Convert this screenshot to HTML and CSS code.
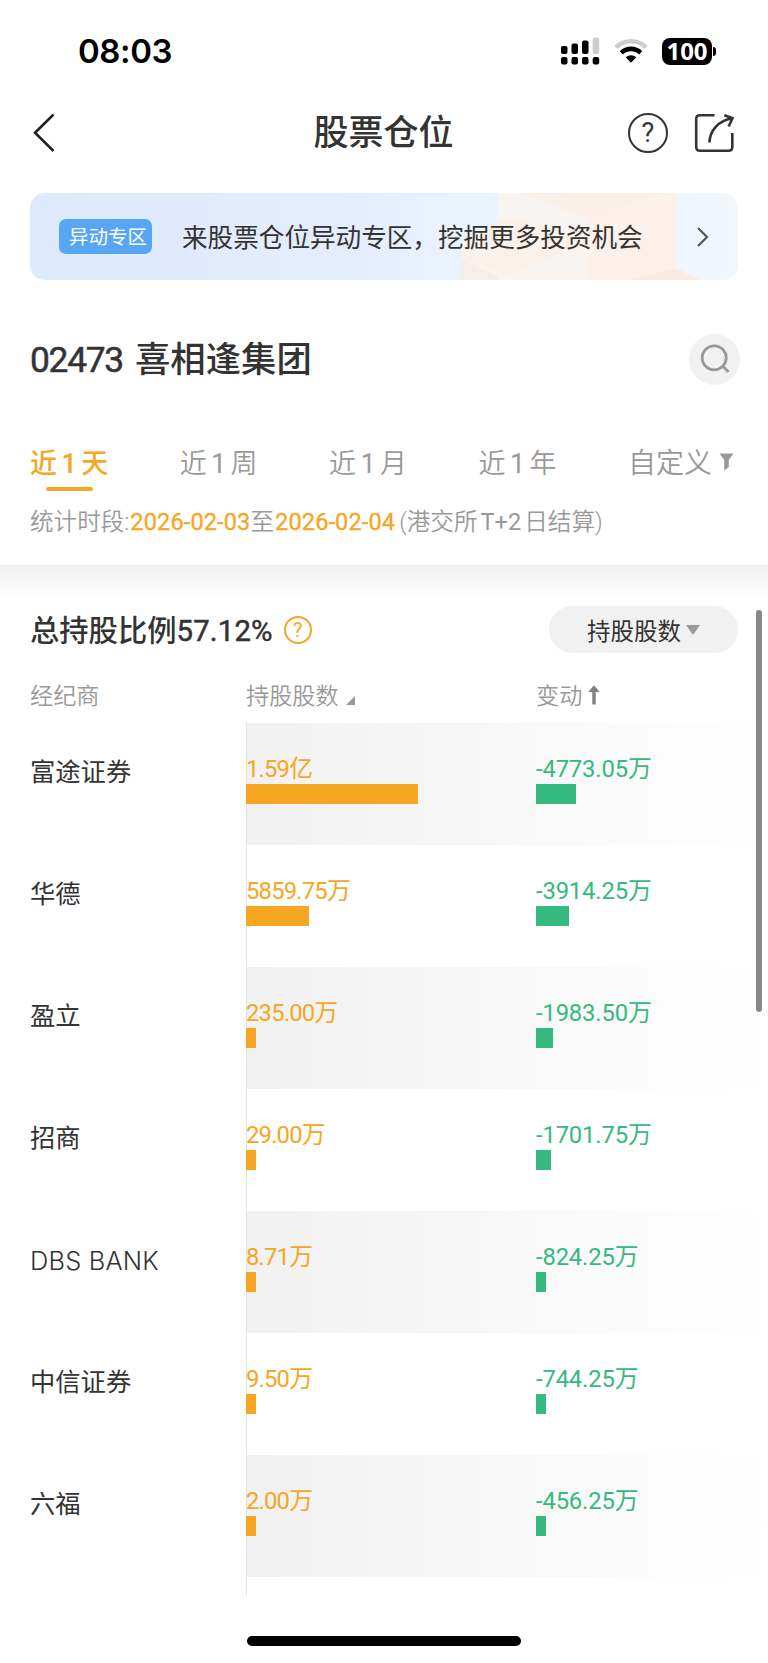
FILE: index.html
```html
<!DOCTYPE html>
<html lang="zh-CN">
<head>
  <meta charset="UTF-8">
  <meta name="viewport" content="width=device-width, initial-scale=1.0">
  <title>股票仓位</title>
  <link rel="stylesheet" href="styles.css">
</head>
<body>
  <div class="status-bar">
    <div class="time">08:03</div>
    <div class="status-icons">
      <svg class="signal" width="39" height="28" viewBox="0 0 39 28">
        <g fill="#000">
          <rect x="0" y="9" width="6.5" height="8" rx="2"/>
          <rect x="10.5" y="6.5" width="6.5" height="10.5" rx="2"/>
          <rect x="21" y="3.5" width="6.5" height="13.5" rx="2"/>
          <rect x="0" y="20" width="6.5" height="7.5" rx="2"/>
          <rect x="10.5" y="20" width="6.5" height="7.5" rx="2"/>
          <rect x="21" y="20" width="6.5" height="7.5" rx="2"/>
          <rect x="31.7" y="20" width="6.5" height="7.5" rx="2"/>
        </g>
        <rect x="31.7" y="0.5" width="6.5" height="16.5" rx="2" fill="#ccc"/>
      </svg>
      <svg class="wifi" width="34" height="26" viewBox="0 0 34 26" fill="none">
        <path d="M2 9.3A21.5 21.5 0 0 1 32 9.3" stroke="#ccc" stroke-width="4.6"/>
        <path d="M7.3 14.8A14 14 0 0 1 26.7 14.8" stroke="#000" stroke-width="4.6"/>
        <path d="M11.7 19.3A7.8 7.8 0 0 1 22.3 19.3L17 24.8Z" fill="#000"/>
      </svg>
      <div class="battery">100</div>
      <div class="battery-cap"></div>
    </div>
  </div>

  <div class="nav">
    <svg class="back" width="24" height="40" viewBox="0 0 24 40" fill="none" stroke="#222" stroke-width="2.6">
      <path d="M21.5 1.5L3 19.8L21.5 38"/>
    </svg>
    <div class="nav-title">股票仓位</div>
    <div class="nav-actions">
      <div class="help">?</div>
      <svg width="40" height="40" viewBox="0 0 40 40" fill="none" stroke="#333" stroke-width="2.6">
        <path d="M20.5 2.2H6Q2.2 2.2 2.2 6V34Q2.2 37.8 6 37.8H34.5Q38.3 37.8 38.3 34V20"/>
        <path d="M15.4 29.5C16 18 24 7.5 38 5.5"/>
        <path d="M30.3 2.2L38.5 5.2L34.7 13.5"/>
      </svg>
    </div>
  </div>

  <div class="banner">
    <svg class="banner-art" width="708" height="87" viewBox="0 0 708 87">
      <path d="M431 66L468 43V0H646V75L670 87H431Z" fill="#f8f4f2"/>
      <path d="M488 0H636L557 25Z" fill="#faf0e8"/>
      <path d="M557 25L646 0V75L612 87H557Z" fill="#fbf1ea"/>
      <path d="M431 66L468 84V87H431Z" fill="#f6eeea"/>
      <path d="M431 50L468 27Q490 20 557 50L478 82L431 66Z" fill="#faf1ea"/>
      <path d="M600 87L646 75L670 87Z" fill="#f9ebe1"/>
    </svg>
    <span class="banner-tag">异动专区</span>
    <span class="banner-text">来股票仓位异动专区，挖掘更多投资机会</span>
    <svg class="banner-arrow" width="14" height="22" viewBox="0 0 14 22" fill="none" stroke="#555" stroke-width="2.2">
      <path d="M2 2L11 11L2 20"/>
    </svg>
  </div>

  <div class="stock">
    <div class="stock-name"><span class="stock-code">02473</span>喜相逢集团</div>
    <div class="search">
      <svg width="30" height="30" viewBox="0 0 30 30" fill="none" stroke="#999" stroke-width="2.8">
        <circle cx="14.2" cy="13.8" r="12"/>
        <path d="M22.5 22L28.5 28"/>
      </svg>
    </div>
  </div>

  <div class="tabs">
    <div class="tab active">近<i>1</i>天</div>
    <div class="tab">近<i>1</i>周</div>
    <div class="tab">近<i>1</i>月</div>
    <div class="tab">近<i>1</i>年</div>
    <div class="tab custom">自定义
      <svg width="15" height="18" viewBox="0 0 15 18" fill="#999">
        <path d="M0.5 0.5H14.5L9.8 7V14L5.2 17.5V7Z"/>
      </svg>
    </div>
  </div>

  <div class="period">统计时段:<b>2026-02-03</b>至<b>2026-02-04</b><span class="period-note">(港交所<i>T+2</i>日结算)</span></div>

  <div class="divider"></div>

  <div class="summary">
    <div class="summary-title">总持股比例<span class="num">57.12%</span></div>
    <div class="summary-help">?</div>
    <div class="select">持股股数<span class="caret"></span></div>
  </div>

  <div class="table-head">
    <div>经纪商</div>
    <div>持股股数
      <svg class="corner" width="9" height="9" viewBox="0 0 9 9">
        <path d="M9 0V9H0Z" fill="#999"/>
      </svg>
    </div>
    <div>变动
      <svg class="up" width="12" height="20" viewBox="0 0 12 20">
        <path d="M6 0.3L11.7 7H7.7V19.5H4.3V7H0.3Z" fill="#808080"/>
      </svg>
    </div>
  </div>

  <div class="table">
    <div class="row">
      <div class="name">富途证券</div>
      <div class="hold">1.59亿<div class="bar" style="width: 172px"></div></div>
      <div class="change">-4773.05万<div class="bar" style="width: 40px"></div></div>
    </div>
    <div class="row">
      <div class="name">华德</div>
      <div class="hold">5859.75万<div class="bar" style="width: 63px"></div></div>
      <div class="change">-3914.25万<div class="bar" style="width: 33px"></div></div>
    </div>
    <div class="row">
      <div class="name">盈立</div>
      <div class="hold">235.00万<div class="bar" style="width: 10px"></div></div>
      <div class="change">-1983.50万<div class="bar" style="width: 17px"></div></div>
    </div>
    <div class="row">
      <div class="name">招商</div>
      <div class="hold">29.00万<div class="bar" style="width: 10px"></div></div>
      <div class="change">-1701.75万<div class="bar" style="width: 15px"></div></div>
    </div>
    <div class="row">
      <div class="name latin">DBS BANK</div>
      <div class="hold">8.71万<div class="bar" style="width: 10px"></div></div>
      <div class="change">-824.25万<div class="bar" style="width: 10px"></div></div>
    </div>
    <div class="row">
      <div class="name">中信证券</div>
      <div class="hold">9.50万<div class="bar" style="width: 10px"></div></div>
      <div class="change">-744.25万<div class="bar" style="width: 10px"></div></div>
    </div>
    <div class="row">
      <div class="name">六福</div>
      <div class="hold">2.00万<div class="bar" style="width: 10px"></div></div>
      <div class="change">-456.25万<div class="bar" style="width: 10px"></div></div>
    </div>
    <div class="row row-cut"><div></div><div class="hold"></div></div>
  </div>

  <div class="home-indicator"></div>
  <div class="scrollbar"></div>
</body>
</html>
```
FILE: styles.css
```css
:root {
  --orange: #f6a623;
  --green: #36b97e;
  --text: #333;
  --gray: #999;
}
* {
  box-sizing: border-box;
}
body {
  margin: 0;
  width: 768px;
  height: 1663px;
  position: relative;
  overflow: hidden;
  background-color: #fff;
  color: var(--text);
  font-family: Roboto, "Noto Sans CJK SC", sans-serif;
}
i {
  font-style: normal;
}

.status-bar {
  height: 102px;
  display: flex;
  justify-content: space-between;
  align-items: center;
  padding: 0 52px 0 78px;
}
.time {
  font: 600 33px/40px Inter, sans-serif;
  letter-spacing: -0.4px;
  color: #000;
}
.status-icons {
  display: flex;
  align-items: center;
}
.wifi {
  margin: 0 14px 0 14px;
}
.battery {
  width: 50px;
  height: 27px;
  border-radius: 8px;
  background-color: #000;
  color: #fff;
  font: 700 24px/25px "Noto Sans", sans-serif;
  text-align: center;
}
.battery-cap {
  width: 3px;
  height: 9px;
  margin-left: 1px;
  border-radius: 0 4px 4px 0;
  background-color: #000;
}

.nav {
  height: 62px;
  display: grid;
  grid-template-columns: 1fr auto 1fr;
  align-items: center;
  padding: 0 33px 0 32px;
}
.nav-title {
  padding-top: 2px;
  font-size: 35px;
  font-weight: 500;
  line-height: 50px;
}
.nav-actions {
  display: flex;
  justify-content: flex-end;
  gap: 26px;
  margin-right: 1px;
}
.help {
  width: 40px;
  height: 40px;
  border: 2.4px solid #333;
  border-radius: 50%;
  font-size: 27px;
  line-height: 37px;
  text-align: center;
}

.banner {
  position: relative;
  height: 87px;
  margin: 29px 30px 0;
  padding: 0 29px;
  display: flex;
  align-items: center;
  border-radius: 15px;
  overflow: hidden;
  background: linear-gradient(to right, #dceafc, #e3edfd 45%, #ebf3fe 62%, #f2f7fe);
}
.banner-art {
  position: absolute;
  left: 0;
  top: 0;
}
.banner-tag {
  position: relative;
  width: 93px;
  height: 35px;
  border-radius: 7px;
  background-color: #58a6f3;
  color: #fff;
  font-size: 19.5px;
  line-height: 38px;
  padding-left: 10px;
  white-space: nowrap;
}
.banner-text {
  position: relative;
  margin-left: 30px;
  padding-top: 3px;
  font-size: 25.6px;
  line-height: 40px;
  white-space: nowrap;
}
.banner-arrow {
  position: relative;
  margin: 0 -1px 0 auto;
}

.stock {
  height: 158px;
  display: flex;
  justify-content: space-between;
  align-items: center;
  padding: 0 28px 0 30px;
}
.stock-name {
  padding-top: 2px;
  font-size: 35.4px;
  font-weight: 500;
  line-height: 50px;
}
.stock-code {
  font-weight: 400;
  -webkit-text-stroke: 0.5px;
  letter-spacing: -1.3px;
  margin-right: 12px;
}
.search {
  width: 51px;
  height: 51px;
  border-radius: 50%;
  background-color: #f1f1f1;
  display: flex;
  justify-content: center;
  align-items: center;
}

.tabs {
  height: 53px;
  display: flex;
  padding: 0 34px 0 30px;
  color: var(--gray);
  font-size: 27px;
  line-height: 52px;
}
.tab {
  white-space: nowrap;
  font-weight: 350;
  margin-right: 71.5px;
}
.tab i {
  margin: 0 4.4px;
  font-weight: 400;
}
.tab.active {
  color: var(--orange);
  font-weight: 500;
}
.tab.active i {
  font-weight: 500;
}
.tab.active::after {
  content: "";
  display: block;
  width: 47px;
  height: 4px;
  margin: -3px auto 0;
  border-radius: 2px;
  background-color: var(--orange);
}
.tab.custom {
  display: flex;
  margin: 0 0 0 auto;
  font-size: 28px;
}
.custom svg {
  margin: 15px 0 0 7px;
}

.period {
  height: 74px;
  padding-left: 30px;
  color: var(--gray);
  font-size: 23.6px;
  font-weight: 350;
  line-height: 62px;
  white-space: nowrap;
}
.period b {
  color: var(--orange);
  font-weight: 400;
  letter-spacing: 0.1px;
  margin-left: 1px;
  -webkit-text-stroke: 0.3px;
}
.period-note {
  margin-left: 4px;
}
.period-note i {
  margin: 0 3px;
  font-weight: 400;
}

.divider {
  height: 34px;
  background: linear-gradient(#f0f0f0, #fff);
}

.summary {
  height: 62px;
  display: flex;
  align-items: center;
  padding: 0 30px;
}
.summary-title {
  padding-top: 1px;
  font-size: 29.3px;
  font-weight: 500;
  line-height: 40px;
}
.summary-title .num {
  font-weight: 400;
  letter-spacing: 0.2px;
  -webkit-text-stroke: 0.5px;
}
.summary-help {
  width: 28px;
  height: 28px;
  margin-left: 11px;
  border: 2px solid var(--orange);
  border-radius: 50%;
  color: var(--orange);
  font-size: 20px;
  line-height: 25px;
  text-align: center;
}
.select {
  width: 189px;
  height: 47px;
  margin: -1px 0 0 auto;
  display: flex;
  align-items: center;
  justify-content: center;
  border-radius: 24px;
  background-color: #f1f1f1;
  font-size: 23.5px;
}
.caret {
  margin-left: 5px;
  border: 7px solid transparent;
  border-top: 10px solid var(--gray);
  border-bottom: 0;
}

.table-head {
  height: 62px;
  display: grid;
  grid-template-columns: 216px 290px 1fr;
  padding-left: 30px;
  color: var(--gray);
  font-size: 23.2px;
  font-weight: 350;
  line-height: 70px;
}
.corner {
  margin-left: 2px;
  vertical-align: -1px;
}
.up {
  vertical-align: -1px;
}

.row {
  height: 122px;
  display: grid;
  grid-template-columns: 246px 290px 1fr;
}
.row:nth-child(odd) {
  background: linear-gradient(to right, #fff 246px, #f1f1f1 246px, #fff 768px);
}
.name {
  padding-left: 30px;
  font-size: 25.3px;
  line-height: 100px;
}
.latin {
  font-family: Inter, sans-serif;
  font-size: 25.4px;
  font-weight: 350;
  letter-spacing: 0.2px;
}
.hold,
.change {
  padding-top: 31px;
  font-size: 23.8px;
  line-height: 30px;
}
.hold {
  color: var(--orange);
  border-left: 1.5px solid #e2e2e2;
  letter-spacing: -0.8px;
  text-indent: -1px;
}
.change {
  color: var(--green);
  letter-spacing: -0.15px;
}
.bar {
  height: 20px;
  background-color: currentColor;
}
.hold .bar {
  margin-left: -1px;
}
.row-cut {
  height: 18px;
}
.row-cut .hold {
  padding: 0;
}

.home-indicator {
  width: 274px;
  height: 10px;
  margin: 41px auto 0;
  border-radius: 5px;
  background-color: #000;
}
.scrollbar {
  position: absolute;
  top: 610px;
  right: 6px;
  width: 6px;
  height: 402px;
  border-radius: 3px;
  background-color: #888;
}
```
